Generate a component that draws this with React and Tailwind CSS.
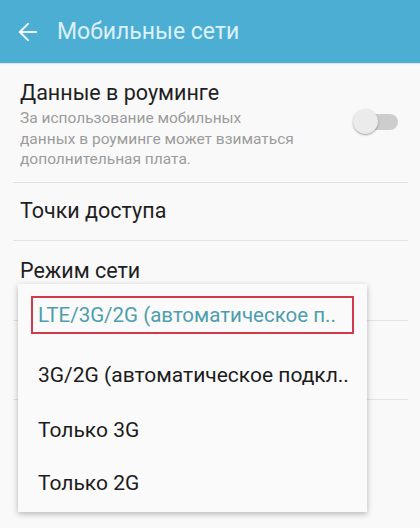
import { ArrowLeft } from 'lucide-react';

const Divider = () => <div className="h-px bg-[#e2e2e2] ml-[13px] mr-[12px]" />;

const options = [
  'LTE/3G/2G (автоматическое п..',
  '3G/2G (автоматическое подкл..',
  'Только 3G',
  'Только 2G',
];

export default function App() {
  return (
    <div className="relative w-[420px] h-[528px] overflow-hidden bg-[#f9f9f9] font-['Roboto','Noto_Sans',sans-serif]">

      {/* Header */}
      <div className="h-[63px] bg-[#4daed3] flex items-center pl-[14px] shadow-[0_1px_1px_rgba(0,0,0,0.08)]">
        <ArrowLeft className="w-[28px] h-[28px] text-[#f4fbfe]" strokeWidth={1.6} />
        <span className="ml-[15px] text-[23px] text-[#dcf1f9] leading-none">Мобильные сети</span>
      </div>

      {/* Roaming */}
      <div className="flex items-start pl-[20px] pr-[22px] pt-[16px] h-[119px]">
        <div className="flex-1">
          <div className="text-[21.5px] leading-[28px] text-[#1f1f1f]">Данные в роуминге</div>
          <div className="mt-[1px] text-[15.5px] leading-[20.5px] text-[#9c9c9c] whitespace-nowrap">
            За использование мобильных<br />
            данных в роуминге может взиматься<br />
            дополнительная плата.
          </div>
        </div>
        <div className="relative w-[45px] h-[26px] mt-[30px]">
          <div className="absolute left-[10px] right-0 top-[5px] h-[16px] rounded-full bg-[#cdcdcd]" />
          <div className="absolute left-0 top-0 w-[25px] h-[25px] rounded-full bg-[#ebebeb] shadow-[0_1px_2px_rgba(0,0,0,0.35)]" />
        </div>
      </div>
      <Divider />

      <div className="h-[57px] flex items-center pl-[20px] text-[21.5px] text-[#1f1f1f]">Точки доступа</div>
      <Divider />

      <div className="h-[79px] pl-[20px] pt-[16px] text-[21.5px] leading-[28px] text-[#1f1f1f]">Режим сети</div>
      <Divider />
      <div className="h-[78px]" />
      <Divider />

      {/* Dropdown menu */}
      <div className="absolute left-[18px] top-[284px] w-[349px] h-[228px] bg-[#fafafa] shadow-[0_2px_6px_rgba(0,0,0,0.28)]">
        <div className="h-[62px] flex items-center px-[13px]">
          <div className="w-full h-[38px] border-2 border-[#d23a4c] flex items-center pl-[5px] text-[20.5px] text-[#4e9eac] whitespace-nowrap overflow-hidden">
            {options[0]}
          </div>
        </div>
        <div className="h-[59px] flex items-center pl-[20px] text-[21px] text-[#1c1c1c] whitespace-nowrap">{options[1]}</div>
        <div className="h-[51px] flex items-center pl-[20px] text-[21px] text-[#1c1c1c]">{options[2]}</div>
        <div className="h-[56px] flex items-center pl-[20px] text-[21px] text-[#1c1c1c]">{options[3]}</div>
      </div>
    </div>
  );
}
